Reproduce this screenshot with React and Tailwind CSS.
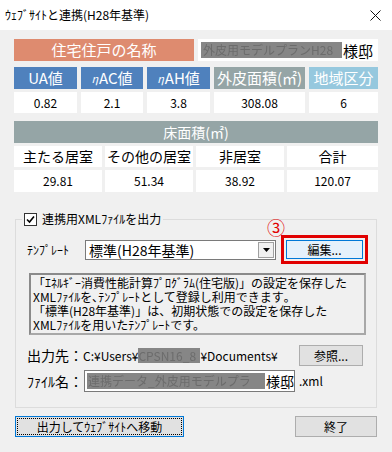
import React from 'react';

const Blur = ({ children, className = '' }) => (
  <span className={`inline-block whitespace-nowrap bg-[#868686] text-[#6c6c6c] blur-[0.6px] ${className}`}>{children}</span>
);

const Cell = ({ children, className = '' }) => (
  <div className={`flex items-center justify-center ${className}`}>{children}</div>
);

const WinButton = ({ children, className = '' }) => (
  <div className={`flex items-center justify-center bg-[#e1e1e1] border border-[#adadad] text-[12px] ${className}`}>
    {children}
  </div>
);

const App = () => {
  return (
    <div className="w-[392px] h-[452px] bg-[#f0f0f0] text-black font-['Noto_Sans_CJK_JP',sans-serif] overflow-hidden">
      {/* Title bar */}
      <div className="h-[30px] bg-white flex items-center justify-between pl-[5px] pr-[11px]">
        <span className="text-[12px] leading-none">ｳｪﾌﾞｻｲﾄと連携(H28年基準)</span>
        <svg width="11" height="11" viewBox="0 0 11 11">
          <path d="M0.5 0.5 L10.5 10.5 M10.5 0.5 L0.5 10.5" stroke="#111" strokeWidth="1" />
        </svg>
      </div>

      <div className="px-[14px]">
        {/* Name row */}
        <div className="mt-[9px] h-[22px] flex gap-[4px]">
          <Cell className="w-[180px] bg-[#de8b6f] text-white text-[15px]">住宅住戸の名称</Cell>
          <div className="flex-1 bg-white flex items-center pl-[3px] text-[15px] leading-none whitespace-nowrap">
            <Blur className="w-[141px] h-[16px] text-[12px] leading-[16px] pl-[2px]">外皮用モデルプランH28</Blur>
            <span className="ml-[1px]">様邸</span>
          </div>
        </div>

        {/* Envelope table */}
        <div className="mt-[6px] grid grid-cols-[63px_62px_63px_91px_69px] gap-x-[4px] gap-y-[3px]">
          <Cell className="h-[22px] bg-[#4f81bd] text-white text-[15px]">UA値</Cell>
          <Cell className="h-[22px] bg-[#4f81bd] text-white text-[15px]"><span className="text-[11px] italic mr-[1px]">η</span>AC値</Cell>
          <Cell className="h-[22px] bg-[#4f81bd] text-white text-[15px]"><span className="text-[11px] italic mr-[1px]">η</span>AH値</Cell>
          <Cell className="h-[22px] bg-[#95a5a6] text-white text-[15px]">外皮面積(㎡)</Cell>
          <Cell className="h-[22px] bg-[#96c8de] text-white text-[15px]">地域区分</Cell>
          <Cell className="h-[21px] bg-white text-[12px]">0.82</Cell>
          <Cell className="h-[21px] bg-white text-[12px]">2.1</Cell>
          <Cell className="h-[21px] bg-white text-[12px]">3.8</Cell>
          <Cell className="h-[21px] bg-white text-[12px]">308.08</Cell>
          <Cell className="h-[21px] bg-white text-[12px]">6</Cell>
        </div>

        {/* Floor area table */}
        <div className="mt-[8px] grid grid-cols-[88px_88px_88px_91px] gap-x-[3px] gap-y-[3px]">
          <Cell className="col-span-4 h-[22px] bg-[#95a5a6] text-white text-[14px]">床面積(㎡)</Cell>
          <Cell className="h-[21px] bg-white text-[14px]">主たる居室</Cell>
          <Cell className="h-[21px] bg-white text-[14px]">その他の居室</Cell>
          <Cell className="h-[21px] bg-white text-[14px]">非居室</Cell>
          <Cell className="h-[21px] bg-white text-[14px]">合計</Cell>
          <Cell className="h-[22px] bg-white text-[12px]">29.81</Cell>
          <Cell className="h-[22px] bg-white text-[12px]">51.34</Cell>
          <Cell className="h-[22px] bg-white text-[12px]">38.92</Cell>
          <Cell className="h-[22px] bg-white text-[12px]">120.07</Cell>
        </div>

        {/* Group box */}
        <fieldset className="mt-[19px] mx-[1px] border border-[#dcdcdc] pb-[15px]">
          <legend className="ml-[6px] px-[2px] h-[16px] flex items-center gap-[5px] text-[12px] leading-none">
            <span className="w-[13px] h-[13px] bg-white border border-[#333] flex items-center justify-center">
              <svg width="9" height="9" viewBox="0 0 9 9">
                <path d="M1 4.5 L3.5 7 L8 1.5" stroke="#000" strokeWidth="1.6" fill="none" />
              </svg>
            </span>
            <span>連携用XMLﾌｧｲﾙを出力</span>
          </legend>

          {/* Template row */}
          <div className="mt-[8px] h-[29px] flex items-center pl-[11px] text-[12px]">
            <span className="w-[58px]">ﾃﾝﾌﾟﾚｰﾄ</span>
            <div className="w-[191px] h-[20px] bg-white border border-[#7a7a7a] flex items-center justify-between pl-[3px] pr-[1px]">
              <span className="text-[14px] leading-none">標準(H28年基準)</span>
              <div className="w-[16px] h-[16px] bg-[#f0f0f0] border border-[#a0a0a0] flex items-center justify-center">
                <svg width="7" height="4" viewBox="0 0 7 4">
                  <path d="M0 0 L7 0 L3.5 4 Z" fill="#000" />
                </svg>
              </div>
            </div>
            <div className="relative ml-[5px] w-[87px] h-[29px] border-[3px] border-[#e10000] p-[2px]">
              <span className="absolute -top-[20px] left-[-17px] text-[#e10000] text-[18px] leading-none">③</span>
              <div className="w-full h-full bg-[#e5f1fb] border border-[#0078d7] flex items-center justify-center text-[12px]">
                編集...
              </div>
            </div>
          </div>

          {/* Description */}
          <div className="mt-[9px] ml-[13px] w-[337px] h-[62px] border-2 border-t-[#8a8a8a] border-l-[#8a8a8a] border-b-[#a8a8a8] border-r-[#a8a8a8] px-[2px] pt-[1px] text-[12px] leading-[14px] whitespace-nowrap">
            <div>「ｴﾈﾙｷﾞｰ消費性能計算ﾌﾟﾛｸﾞﾗﾑ(住宅版)」の設定を保存した</div>
            <div>XMLﾌｧｲﾙを､ﾃﾝﾌﾟﾚｰﾄとして登録し利用できます｡</div>
            <div>「標準(H28年基準)」は、初期状態での設定を保存した</div>
            <div>XMLﾌｧｲﾙを用いたﾃﾝﾌﾟﾚｰﾄです。</div>
          </div>

          {/* Output path */}
          <div className="mt-[10px] h-[21px] flex items-center pl-[11px] text-[12px]">
            <span className="w-[56px] text-[14px]">出力先：</span>
            <span className="flex-1 whitespace-nowrap flex items-center">
              C:¥Users¥<Blur className="w-[62px] h-[15px] leading-[15px]">CPSN16_8</Blur>¥Documents¥
            </span>
            <WinButton className="w-[64px] h-[21px] mr-[13px]">参照...</WinButton>
          </div>

          {/* File name */}
          <div className="mt-[4px] h-[22px] flex items-center pl-[11px] text-[12px]">
            <span className="w-[57px] text-[14px]">ﾌｧｲﾙ名：</span>
            <div className="w-[211px] h-[22px] bg-white border border-[#7a7a7a] flex items-center pl-[2px] text-[14px] leading-none whitespace-nowrap">
              <Blur className="w-[183px] h-[16px] text-[12px] leading-[16px] pl-[1px]">連携データ_外皮用モデルプラ</Blur>
              <span className="ml-[1px]">様邸</span>
            </div>
            <span className="ml-[4px]">.xml</span>
          </div>
        </fieldset>

        {/* Bottom buttons */}
        <div className="mt-[8px] mx-[1px] flex justify-between">
          <div className="w-[169px] h-[21px] bg-[#e1e1e1] border border-[#0078d7] p-[1px]">
            <div className="w-full h-full border border-dotted border-[#000] flex items-center justify-center text-[12px]">
              出力してｳｪﾌﾞｻｲﾄへ移動
            </div>
          </div>
          <WinButton className="w-[82px] h-[21px]">終了</WinButton>
        </div>
      </div>
    </div>
  );
};

export default App;
